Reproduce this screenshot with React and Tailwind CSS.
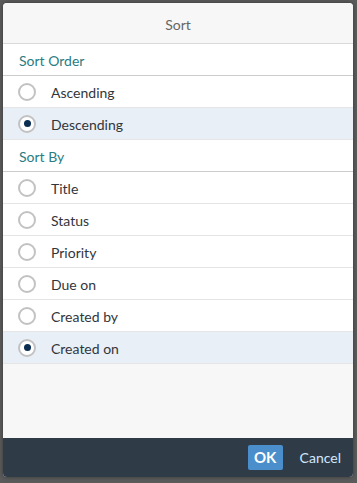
import React from "react";

function Radio({ checked }) {
  return (
    <span className="flex h-[18px] w-[18px] shrink-0 items-center justify-center rounded-full border-2 border-[#c2c2c2] bg-white">
      {checked && <span className="h-[7px] w-[7px] rounded-full bg-[#0b2d51]" />}
    </span>
  );
}

function Row({ label, checked }) {
  return (
    <div
      className={`flex h-[32px] items-center border-b border-[#e5e5e5] pl-[15px] ${
        checked ? "bg-[#e8eff6]" : "bg-white"
      }`}
    >
      <Radio checked={checked} />
      <span className="ml-[15px] pt-[2px] text-[14px] text-[#32363a]">{label}</span>
    </div>
  );
}

function GroupHeader({ label }) {
  return (
    <div className="flex h-[32px] items-center border-b border-[#cccccc] bg-white pl-[16px] pt-[2px] text-[14px] text-[#2b7c83]">
      {label}
    </div>
  );
}

export default function App() {
  return (
    <div
      className="flex h-[483px] w-[357px] bg-[#5b5b5b] pl-[3px] pr-[4px] pt-[3px] pb-[6px]"
      style={{ fontFamily: "Lato, 'Liberation Sans', sans-serif" }}
    >
      <div className="flex flex-1 flex-col overflow-hidden rounded-[4px] bg-[#f7f7f7] shadow-[0_0_4px_rgba(0,0,0,0.4)]">
        <div className="flex h-[41px] shrink-0 items-center justify-center border-b border-[#d9d9d9] bg-[#f7f7f7] pt-[2px] text-[14px] text-[#666666]">
          Sort
        </div>
        <div className="flex flex-col">
          <GroupHeader label="Sort Order" />
          <Row label="Ascending" />
          <Row label="Descending" checked />
          <GroupHeader label="Sort By" />
          <Row label="Title" />
          <Row label="Status" />
          <Row label="Priority" />
          <Row label="Due on" />
          <Row label="Created by" />
          <Row label="Created on" checked />
        </div>
        <div className="flex-1 bg-[#f7f7f7]" />
        <div className="flex h-[39px] shrink-0 items-center justify-end gap-[17px] bg-[#2f3c48] pr-[12px]">
          <button className="flex h-[25px] w-[35px] items-center justify-center rounded-[2px] bg-[#4a8fcc] text-[15px] font-bold text-white">
            OK
          </button>
          <button className="text-[14px] text-[#d1e8ff]">Cancel</button>
        </div>
      </div>
    </div>
  );
}
